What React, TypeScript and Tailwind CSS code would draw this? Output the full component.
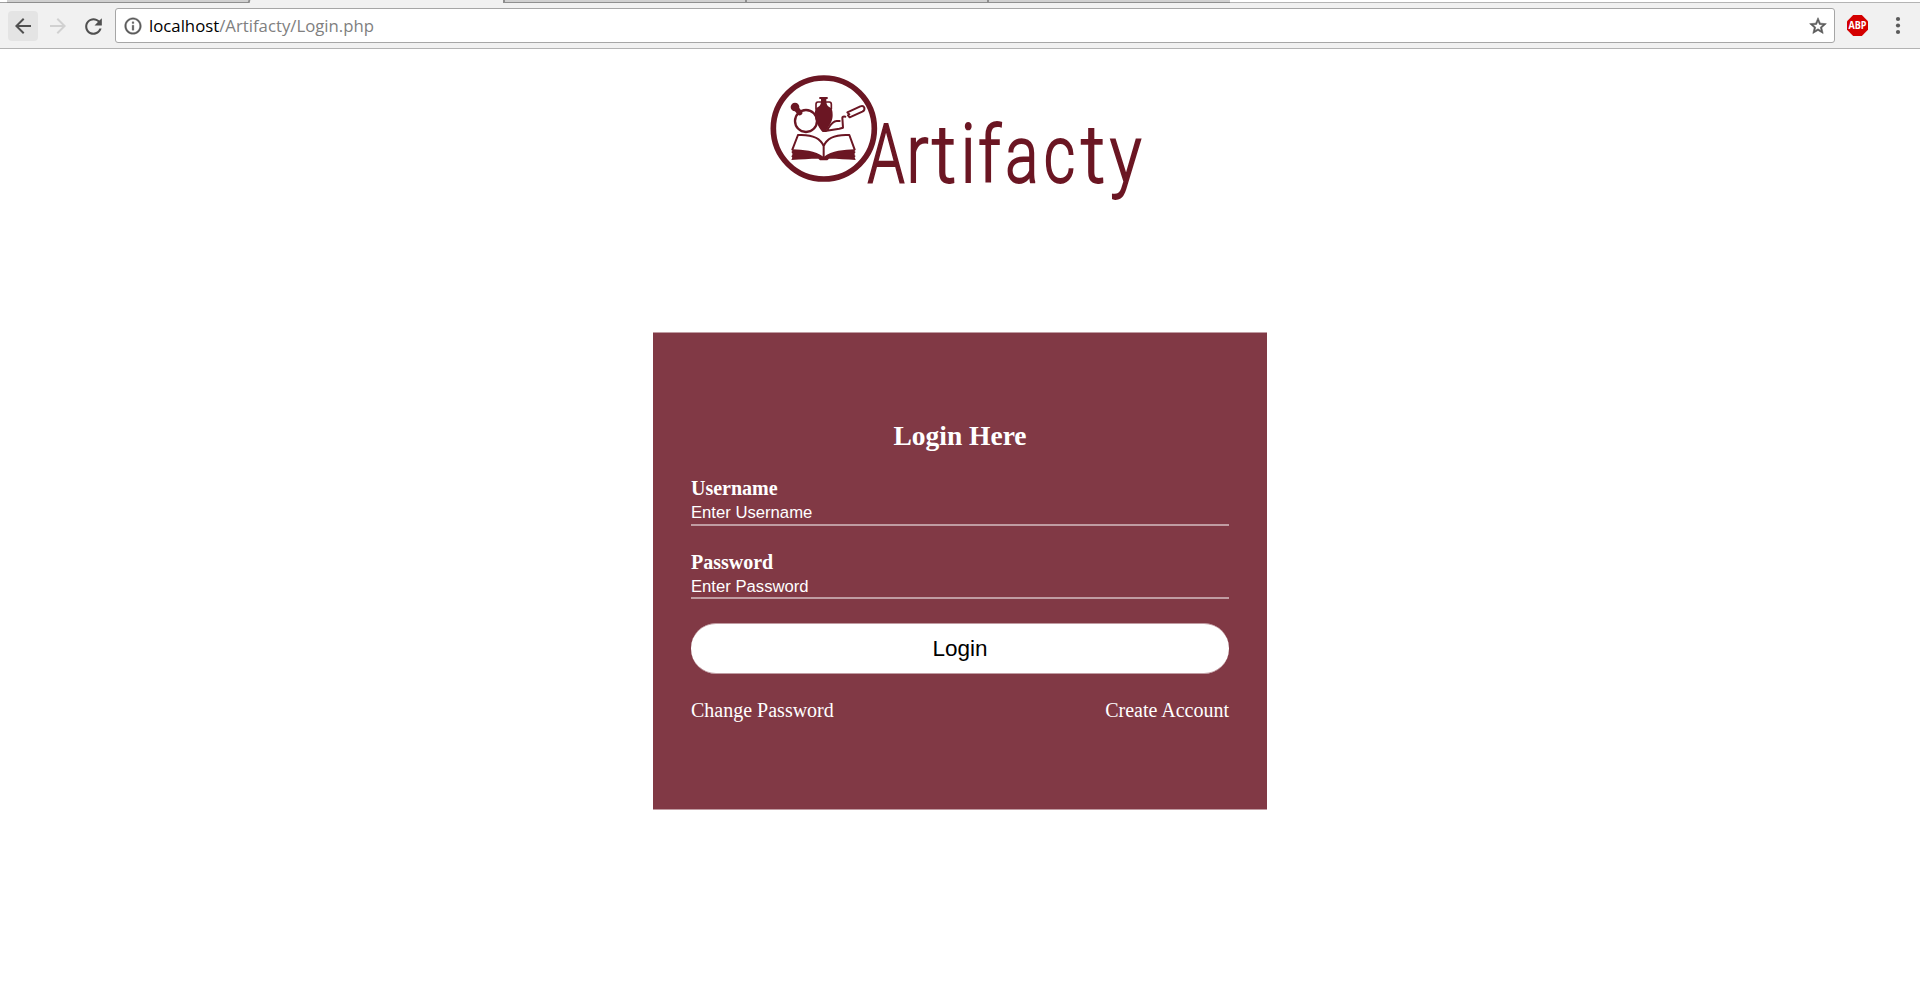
function TabStrip() {
  return (
    <div className="flex h-[3px] w-full bg-white">
      <div className="w-[7px] border-b border-[#a0a0a0]" />
      <div className="w-[241px] border-b border-[#8e8e8e] bg-[#d0d0d0]" />
      <div className="w-[2px] -skew-x-12 bg-[#8e8e8e]" />
      <div className="w-[253px] bg-[#f1f1f1]" />
      <div className="w-[242px] border-b border-l-2 border-[#8e8e8e] bg-[#d0d0d0]" />
      <div className="w-[242px] border-b border-l-2 border-[#8e8e8e] bg-[#d0d0d0]" />
      <div className="w-[243px] border-b border-l-2 border-[#8e8e8e] bg-[#d0d0d0]" />
      <div className="flex-1 border-b border-[#b4b4b4]" />
    </div>
  );
}

function Toolbar() {
  return (
    <div className="flex h-[46px] w-full items-start border-b border-[#b3b3b3] bg-[#f1f1f1] pl-2 pt-[5px]">
      <button className="mt-[3px] flex size-[30px] items-center justify-center rounded-sm bg-[#e4e4e4]" aria-label="Back">
        <svg className="size-6" viewBox="0 0 24 24" fill="#505050">
          <path d="M20 11H7.83l5.59-5.59L12 4l-8 8 8 8 1.41-1.41L7.83 13H20v-2z" />
        </svg>
      </button>
      <button className="ml-[5px] mt-[3px] flex size-[30px] items-center justify-center" aria-label="Forward">
        <svg className="size-6" viewBox="0 0 24 24" fill="#d1d1d1">
          <path d="M12 4l-1.41 1.41L16.17 11H4v2h12.17l-5.58 5.59L12 20l8-8z" />
        </svg>
      </button>
      <button className="ml-[5px] mt-[3px] flex size-[30px] items-center justify-center" aria-label="Reload">
        <svg className="size-[25px]" viewBox="0 0 24 24" fill="#505050">
          <path d="M17.65 6.35C16.2 4.9 14.21 4 12 4c-4.42 0-7.99 3.58-7.99 8s3.57 8 7.99 8c3.73 0 6.84-2.55 7.73-6h-2.08c-.82 2.33-3.04 4-5.65 4-3.31 0-6-2.69-6-6s2.69-6 6-6c1.66 0 3.14.69 4.22 1.78L13 11h7V4l-2.35 2.35z" />
        </svg>
      </button>
      <div className="ml-[7px] flex h-[35px] w-[1720px] items-center rounded-[3px] border border-[#a6a6a6] bg-white pl-[7px] pr-[6px]">
        <svg className="size-5" viewBox="0 0 24 24" fill="#5a5a5a" stroke="#5a5a5a" strokeWidth="0.4">
          <path d="M11 7h2v2h-2zm0 4h2v6h-2zm1-9C6.48 2 2 6.48 2 12s4.48 10 10 10 10-4.48 10-10S17.52 2 12 2zm0 18c-4.41 0-8-3.59-8-8s3.59-8 8-8 8 3.59 8 8-3.59 8-8 8z" />
        </svg>
        <p className="ml-[6px] flex-1 font-['Open_Sans',sans-serif] text-[16.75px] leading-6 text-[#808080]">
          <span className="text-black">localhost</span>/Artifacty/Login.php
        </p>
        <svg className="size-5" viewBox="0 0 24 24" fill="#5a5a5a" stroke="#5a5a5a" strokeWidth="0.7">
          <path d="M22 9.24l-7.19-.62L12 2 9.19 8.63 2 9.24l5.46 4.73L5.82 21 12 17.27 18.18 21l-1.63-7.03L22 9.24zM12 15.4l-3.76 2.27 1-4.28-3.32-2.88 4.38-.38L12 6.1l1.71 4.04 4.38.38-3.32 2.88 1 4.28L12 15.4z" />
        </svg>
      </div>
      <svg className="ml-3 mt-[7px] h-[21px] w-[21px]" viewBox="0 0 21 21">
        <path d="M6.2 0h8.6L21 6.2v8.6L14.8 21H6.2L0 14.8V6.2z" fill="#d40000" />
        <text x="10.5" y="14" textAnchor="middle" textLength="18" lengthAdjust="spacingAndGlyphs" fill="#fff" className="font-['Open_Sans',sans-serif] text-[10px] font-bold">
          ABP
        </text>
      </svg>
      <svg className="ml-[24px] mt-[7px] h-[21px] w-[12px]" viewBox="0 0 12 21" fill="#5a5a5a">
        <circle cx="6" cy="4" r="2.1" />
        <circle cx="6" cy="10.5" r="2.1" />
        <circle cx="6" cy="17" r="2.1" />
      </svg>
    </div>
  );
}

/* Wordmark letters: left offset, horizontal scale, vertical scale */
const wordmark: [string, number, number, number][] = [
  ["A", 107.5, 0.72, 0.99],
  ["r", 146.4, 0.79, 0.98],
  ["t", 171.8, 0.92, 0.97],
  ["i", 200.8, 0.8, 0.98],
  ["f", 218, 0.84, 0.95],
  ["a", 245.2, 0.75, 0.97],
  ["c", 283.7, 0.74, 0.97],
  ["t", 320.8, 0.92, 0.97],
  ["y", 349.7, 0.81, 0.97],
];

function Logo() {
  return (
    <svg className="mt-4 h-[145px] w-[400px]" viewBox="0 0 400 145" role="img">
      <g transform="scale(0.33333)" fill="none" stroke="#6b1623" strokeLinecap="round" strokeLinejoin="round">
        <circle cx="191.5" cy="190.5" r="151.5" strokeWidth="17" />
        {/* magnifying glass */}
        <circle cx="138" cy="168" r="33" strokeWidth="7" />
        <circle cx="105" cy="126" r="13" fill="#6b1623" stroke="none" />
        <path d="M108 130L119 143" strokeWidth="16" />
        {/* amphora */}
        <path d="M178 96H203V102H199V108C199 118 202 123 209 127C217 131 218 140 218 150C218 166 211 177 204 188L200 195V201H188C181 194 166 172 165 152C164 140 165 131 173 127C180 123 183 118 183 108V102H178Z" fill="#6b1623" stroke="none" />
        <path d="M182 111H174Q168 111 168 118V132M200 111H208Q214 111 214 118V132" strokeWidth="5" />
        {/* trowel */}
        <path d="M200 197L238 191L249 188L247 158Q247 154 256 155M202 194C210 182 216 169 230 168Q238 168 239 168" strokeWidth="6" />
        <path d="M262 142L301 124Q310 121 313 128Q315 136 307 140L269 157L264 151L268 148Z" strokeWidth="6" />
        {/* open book */}
        <path d="M114 210L97 254M114 210C150 208 180 216 191 243C202 216 234 208 268 210L284 254M191 243V276" strokeWidth="6" />
        <path d="M97 253C130 254 165 257 191 276C216 257 252 254 284 253V259L287 261L284 265V271L287 273L284 277L287 285C260 283 234 281 207 281L202 286H180L175 281C148 281 124 283 94 285L97 278L94 274L97 270V265L94 261L97 258Z" fill="#6b1623" stroke="none" />
      </g>
      <g fill="#6b1623" stroke="#6b1623" strokeWidth="1.9" className="font-['Roboto',sans-serif] text-[82.5px] font-light">
        {wordmark.map(([letter, x, sx, sy], i) => (
          <text key={i} transform={`translate(${x} 116.7) scale(${sx} ${sy})`}>
            {letter}
          </text>
        ))}
      </g>
    </svg>
  );
}

function LoginCard() {
  return (
    <form className="mt-[122px] h-[478px] w-[614px] border-y border-[#c09ca2] bg-[#813945] px-[38px] pt-[87px] font-['Liberation_Serif',serif] text-xl leading-6 text-white">
      <h1 className="text-center text-[27.5px] font-bold leading-8">Login Here</h1>
      <label className="mt-6 block font-bold">Username</label>
      <input
        className="block h-[26px] w-full border-b-2 border-[#c09ca2] bg-transparent px-0 pb-0 pt-px font-['Liberation_Sans',sans-serif] text-[16.67px] outline-none placeholder:text-white"
        placeholder="Enter Username"
      />
      <label className="mt-6 block font-bold">Password</label>
      <input
        className="block h-[25px] w-full border-b-2 border-[#c09ca2] bg-transparent px-0 pb-0 pt-[3px] font-['Liberation_Sans',sans-serif] text-[16.67px] leading-5 outline-none placeholder:text-white"
        placeholder="Enter Password"
      />
      <button type="button" className="mt-6 block h-[51px] w-full rounded-[25px] border-y border-[#c09ca2] bg-white font-['Liberation_Sans',sans-serif] text-[22.5px] text-black">
        Login
      </button>
      <div className="mt-6 flex justify-between">
        <a>Change Password</a>
        <a>Create Account</a>
      </div>
    </form>
  );
}

export default function App() {
  return (
    <div className="flex h-[987px] w-full flex-col overflow-hidden bg-white">
      <header>
        <TabStrip />
        <Toolbar />
      </header>
      <main className="flex flex-col items-center">
        <Logo />
        <LoginCard />
      </main>
    </div>
  );
}
